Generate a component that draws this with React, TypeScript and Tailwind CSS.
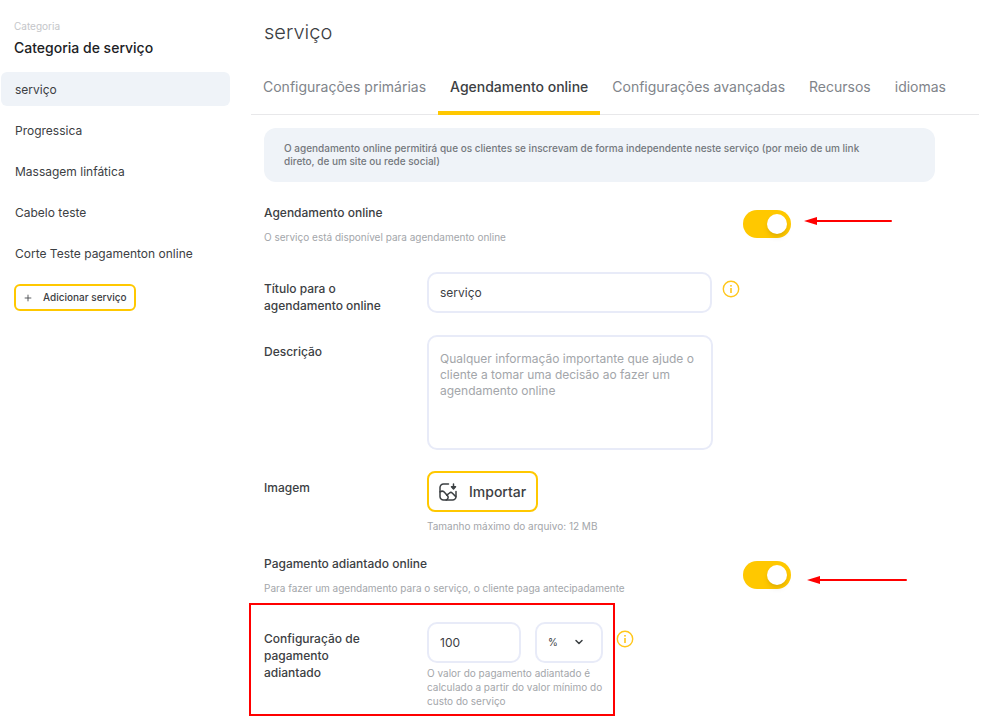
import { useState } from 'react';
import type { ReactNode } from 'react';
import { ChevronDown, Plus } from 'lucide-react';
import clsx from 'clsx';

const services = ['serviço', 'Progressica', 'Massagem linfática', 'Cabelo teste', 'Corte Teste pagamenton online'];

const tabs = ['Configurações primárias', 'Agendamento online', 'Configurações avançadas', 'Recursos', 'idiomas'];

function InfoButton() {
  return (
    <button type="button" aria-label="Mais informações" className="mt-2 h-[18px] w-[18px] shrink-0 text-[#ffc61a]">
      <svg viewBox="0 0 18 18" fill="none" className="h-full w-full">
        <circle cx="9" cy="9" r="7.7" stroke="currentColor" strokeWidth="1.4" />
        <rect x="8.2" y="8" width="1.6" height="5" fill="currentColor" />
        <rect x="8.2" y="5" width="1.6" height="1.6" fill="currentColor" />
      </svg>
    </button>
  );
}

function ImportIcon() {
  return (
    <svg
      viewBox="0 0 18 18"
      fill="none"
      stroke="currentColor"
      strokeWidth="1.5"
      strokeLinecap="round"
      strokeLinejoin="round"
      className="h-[18px] w-[18px]"
    >
      <path d="M9.5 1H4.5A3.5 3.5 0 0 0 1 4.500v9A3.500 3.500 0 0 0 4.500 17h9a3.500 3.500 0 0 0 3.500-3.500V8.500" />
      <path d="M14.5 1v4" />
      <path d="M12.5 3.8h4l-2 2.2z" fill="currentColor" />
      <path d="M1 8.800c2-1.200 3.600-.8 4.900.9L8.700 13c1 1.500.2 3-1.500 4" />
      <path d="M7.800 12.200l2.700-2.200c.9-.8 1.900-.8 2.700 0l3.600 3.600" />
    </svg>
  );
}

function Arrow({ className }: { className: string }) {
  return (
    <div aria-hidden="true" className={clsx('flex items-center text-[#f00]', className)}>
      <svg viewBox="0 0 13 8" fill="currentColor" className="h-2 w-[13px] shrink-0">
        <path d="M0 4L13 0v8z" />
      </svg>
      <div className="h-0.5 flex-1 rounded-r-full bg-current" />
    </div>
  );
}

interface ToggleRowProps {
  id: string;
  title: string;
  description: string;
  children: ReactNode;
}

function ToggleRow({ id, title, description, children }: ToggleRowProps) {
  const [checked, setChecked] = useState(true);

  return (
    <div className="flex items-center">
      <div className="w-[479px] shrink-0">
        <label htmlFor={id} className="block text-xs leading-5 font-medium">
          {title}
        </label>
        <p className="mt-1.5 text-[10px] leading-4 text-[#a3a6aa]">{description}</p>
      </div>
      <input
        id={id}
        type="checkbox"
        role="switch"
        checked={checked}
        onChange={(e) => setChecked(e.target.checked)}
        className="h-7 w-12 shrink-0 cursor-pointer appearance-none rounded-full bg-gray-300 p-1 before:block before:h-5 before:w-5 before:rounded-full before:bg-white before:shadow-md checked:bg-[#ffc800] checked:before:ml-5"
      />
      {children}
    </div>
  );
}

interface FieldProps {
  id: string;
  label: string;
  children: ReactNode;
}

function Field({ id, label, children }: FieldProps) {
  return (
    <div className="flex items-start">
      <div className="w-[163px] shrink-0 pt-2">
        <label htmlFor={id} className="block w-[122px] text-xs leading-[17px] font-medium">
          {label}
        </label>
      </div>
      {children}
    </div>
  );
}

export default function App() {
  const [service, setService] = useState(services[0]);
  const [tab, setTab] = useState(tabs[1]);
  const [title, setTitle] = useState('serviço');
  const [amount, setAmount] = useState('100');

  return (
    <div className="flex min-h-screen bg-white font-['Inter',sans-serif] text-[#3c4043]">
      <aside className="w-[230px] shrink-0 pt-[18px] pl-px">
        <p className="pl-[13px] text-[10px] leading-4 text-[#c4c6c9]">Categoria</p>
        <h2 className="mt-1 pl-[13px] text-sm leading-5 font-medium text-[#202124]">Categoria de serviço</h2>
        <ul className="mt-3.5 flex flex-col gap-[7px]">
          {services.map((item) => (
            <li key={item}>
              <button
                type="button"
                onClick={() => setService(item)}
                className={clsx(
                  'w-full rounded-md px-3.5 pt-[9px] pb-[7px] text-left text-xs leading-[18px]',
                  item === service && 'bg-[#eff3f8]',
                )}
              >
                {item}
              </button>
            </li>
          ))}
        </ul>
        <button
          type="button"
          className="mt-3.5 ml-[13px] flex h-[27px] items-center gap-2.5 rounded-md border-2 border-[#ffc800] px-[7px] text-[10px] font-medium"
        >
          <Plus className="h-2.5 w-2.5" strokeWidth={2} />
          Adicionar serviço
        </button>
      </aside>

      <main className="mr-[21px] ml-[21px] min-w-0 flex-1 pt-[18px]">
        <h1 className="mb-[17px] pl-[13px] text-xl leading-7 font-light">serviço</h1>

        <nav className="flex border-b border-[#e8e8ea]">
          {tabs.map((item) => (
            <button
              key={item}
              type="button"
              onClick={() => setTab(item)}
              className={clsx(
                '-mb-px border-b-4 px-3 py-3 text-sm leading-6 whitespace-nowrap',
                item === tab ? 'border-[#ffc800] font-medium' : 'border-transparent text-[#80848a]',
              )}
            >
              {item}
            </button>
          ))}
        </nav>

        <div className="mt-[13px] flex flex-col gap-[21px] pl-[13px]">
          <p className="mr-11 rounded-xl bg-[#eff3f8] py-3.5 pr-12 pl-5 text-[10px] leading-[13px] font-medium text-[#74787d]">
            O agendamento online permitirá que os clientes se inscrevam de forma independente neste serviço (por meio de um
            link direto, de um site ou rede social)
          </p>

          <ToggleRow
            id="online-booking"
            title="Agendamento online"
            description="O serviço está disponível para agendamento online"
          >
            <Arrow className="mb-1.5 ml-[13px] w-[88px]" />
          </ToggleRow>

          <div className="mt-1.5">
            <Field id="booking-title" label="Título para o agendamento online">
              <input
                id="booking-title"
                value={title}
                onChange={(e) => setTitle(e.target.value)}
                className="mr-2.5 h-[41px] w-[285px] rounded-[10px] border-2 border-[#e8ebf8] px-[11px] text-xs outline-none"
              />
              <InfoButton />
            </Field>
          </div>

          <Field id="description" label="Descrição">
            <textarea
              id="description"
              placeholder="Qualquer informação importante que ajude o cliente a tomar uma decisão ao fazer um agendamento online"
              className="block h-[115px] w-[286px] resize-none rounded-[10px] border-2 border-[#e8ebf8] px-[11px] py-3.5 text-xs leading-4 outline-none placeholder:text-[#a3a6aa]"
            />
          </Field>

          <Field id="image" label="Imagem">
            <div>
              <button
                id="image"
                type="button"
                className="flex h-[41px] items-center gap-3 rounded-lg border-2 border-[#ffc800] px-2.5 text-sm font-medium"
              >
                <ImportIcon />
                Importar
              </button>
              <p className="mt-[7px] text-[10px] leading-[14px] text-[#a3a6aa]">Tamanho máximo do arquivo: 12 MB</p>
            </div>
          </Field>

          <ToggleRow
            id="prepayment"
            title="Pagamento adiantado online"
            description="Para fazer um agendamento para o serviço, o cliente paga antecipadamente"
          >
            <Arrow className="mt-2.5 ml-4 w-[100px]" />
          </ToggleRow>

          <div className="relative mt-[5px]">
            <Field id="prepayment-amount" label="Configuração de pagamento adiantado">
              <div className="w-[189px] shrink-0">
                <div className="flex gap-3.5">
                  <input
                    id="prepayment-amount"
                    value={amount}
                    onChange={(e) => setAmount(e.target.value)}
                    className="h-[41px] w-[94px] rounded-[10px] border-2 border-[#e8ebf8] px-[11px] text-xs outline-none"
                  />
                  <div className="relative">
                    <select
                      aria-label="Unidade"
                      className="h-[41px] w-[68px] appearance-none rounded-[10px] border-2 border-[#e8ebf8] px-[11px] text-[10px] outline-none"
                    >
                      <option>%</option>
                    </select>
                    <ChevronDown className="pointer-events-none absolute top-3.5 right-[18px] h-3 w-3" strokeWidth={3} />
                  </div>
                </div>
                <p className="mt-[3px] text-[10px] leading-[14px] text-[#a3a6aa]">
                  O valor do pagamento adiantado é calculado a partir do valor mínimo do custo do serviço
                </p>
              </div>
              <InfoButton />
            </Field>
            <div className="pointer-events-none absolute -top-[19px] -bottom-2 -left-[15px] w-[366px] border-2 border-[#f00]" />
          </div>
        </div>
      </main>
    </div>
  );
}
